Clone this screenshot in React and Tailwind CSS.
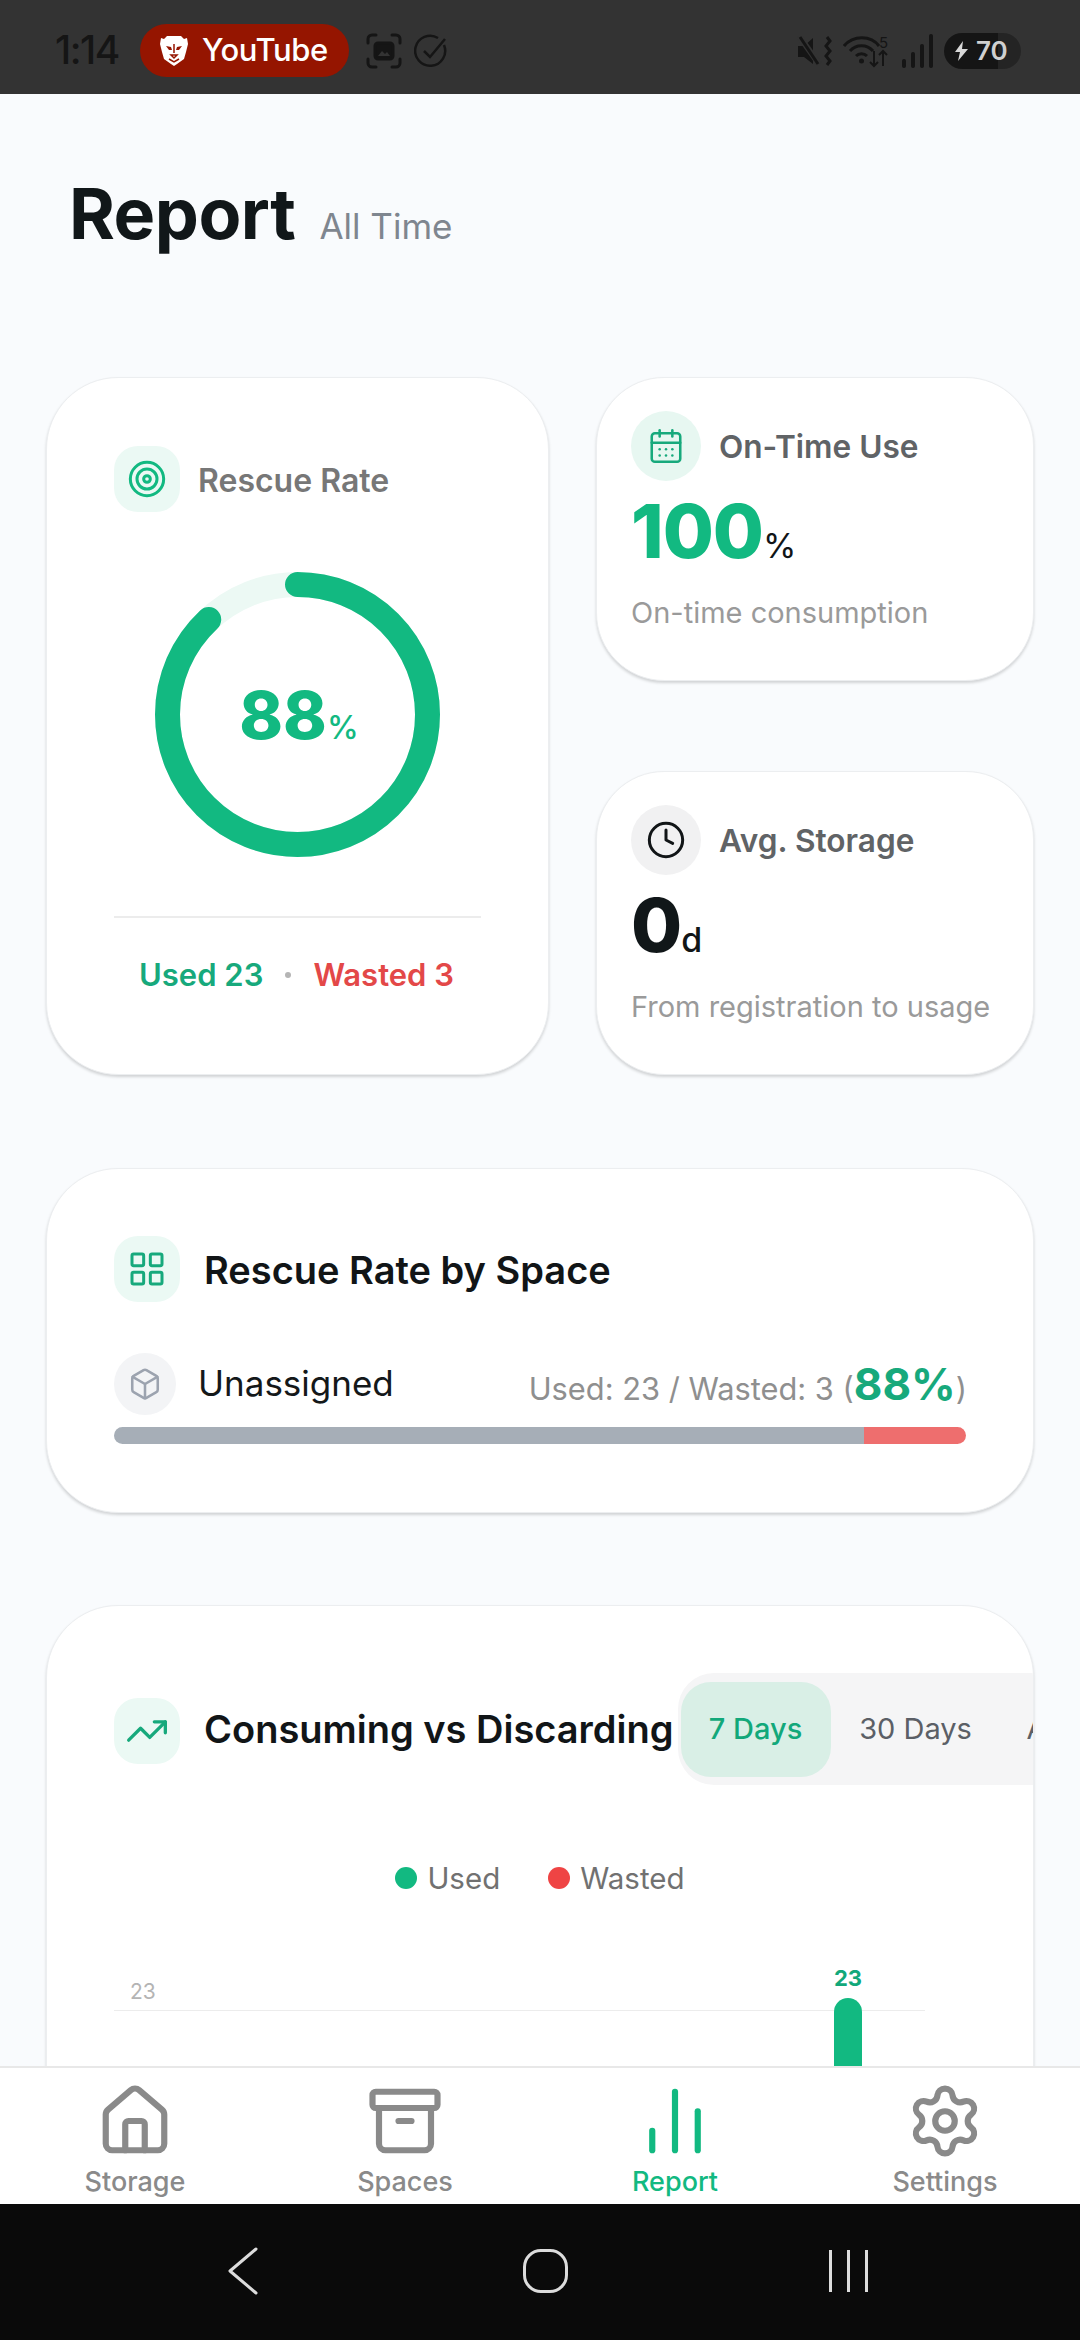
import { Archive, Box, CalendarDays, ChartNoAxesColumn, Clock, House, LayoutGrid, Settings, Target, TrendingUp } from "lucide-react"

const font = { fontFamily: "Inter, 'Liberation Sans', sans-serif" }

function StatusBar() {
  return (
    <div className="h-[94px] shrink-0 bg-[#333333] flex items-center pl-[55px] pt-[7px] text-[#151515]">
      <span className="text-[39px] font-medium tracking-[-1.5px] w-[85px]">1:14</span>
      <div className="w-[209px] h-[53px] rounded-full bg-[#951500] flex items-center pl-[20px] gap-[14px]">
        {/* brave lion */}
        <svg width="28" height="30" viewBox="0 0 28 30">
          <path d="M7 0h14l3 3 3-1 1 6-2 8-2 7-7 5-3 2-3-2-7-5-2-7-2-8 1-6 3 1z" fill="#fff" />
          <path d="M6 10l5 1 1 3-3 0zM22 10l-5 1-1 3 3 0z" fill="#951500" />
          <path d="M14 8v9M11 19h6l-3 3zM9 23l5 3 5-3" fill="none" stroke="#951500" strokeWidth="1.5" />
        </svg>
        <span className="text-[31px] font-medium text-white tracking-[-0.4px]">YouTube</span>
      </div>
      <svg className="ml-[17px]" width="36" height="36" viewBox="0 0 36 36" fill="none" stroke="#151515" strokeWidth="3" strokeLinecap="round">
        <path d="M2 10V6a4 4 0 0 1 4-4h4M26 2h4a4 4 0 0 1 4 4v4M34 26v4a4 4 0 0 1-4 4h-4M10 34H6a4 4 0 0 1-4-4v-4" />
        <rect x="9" y="10" width="18" height="16" rx="3" fill="#151515" />
        <path d="M12 23l4-5 3 3 2-2 3 4z" fill="#333333" stroke="none" />
      </svg>
      <svg className="ml-[12px]" width="34" height="34" viewBox="0 0 34 34" fill="none" stroke="#151515" strokeWidth="2.5">
        <path d="M30 11a15 15 0 1 1-6-7" />
        <path d="M10 17l6 6L31 5" />
      </svg>
      <div className="ml-auto mr-[59px] flex items-center">
        <svg width="35" height="30" viewBox="0 0 35 30" fill="#151515">
          <path d="M1 10h6l9-8v26l-9-7H1z" />
          <path d="M2 0l20 28" stroke="#333333" strokeWidth="6" />
          <path d="M3 1l18 27" stroke="#151515" strokeWidth="3" />
          <path d="M30 1l3 4-4 5 4 5-4 5 4 5-3 4" fill="none" stroke="#151515" strokeWidth="3" />
        </svg>
        <svg className="ml-[11px]" width="47" height="34" viewBox="0 0 47 34" fill="none" stroke="#151515" strokeWidth="3">
          <path d="M1 12C10 1 28 1 36 12M7 17C13 10 24 10 30 17M13 22C16 19 21 19 24 22" />
          <circle cx="18.5" cy="27" r="2.5" fill="#151515" stroke="none" />
          <path d="M31 17v15M27 28l4 4 4-4M40 32V17M36 21l4-4 4 4" strokeWidth="2" />
          <text x="36" y="14" fontSize="15" fill="#151515" stroke="none" fontFamily="Inter">5</text>
        </svg>
        <svg className="ml-[12px]" width="31" height="34" viewBox="0 0 31 34" fill="#151515">
          <rect x="0" y="25" width="4" height="9" rx="2" />
          <rect x="9" y="18" width="4" height="16" rx="2" />
          <rect x="18" y="10" width="4" height="24" rx="2" />
          <rect x="27" y="0" width="4" height="34" rx="2" />
        </svg>
        <div className="ml-[11px] w-[77px] h-[36px] rounded-full bg-[linear-gradient(to_right,#151515_70%,#242424_70%)] flex items-center pl-[10px] gap-[7px]">
          <svg width="15" height="20" viewBox="0 0 15 20" fill="#d8d8d8"><path d="M9 0L1 11h5l-2 9 10-12H8z" /></svg>
          <span className="text-[26px] font-semibold leading-none text-[#d0d0d0]">70</span>
        </div>
      </div>
    </div>
  )
}

function IconBox({ children, className = "" }) {
  return <div className={`w-[66px] h-[66px] shrink-0 flex items-center justify-center ${className}`}>{children}</div>
}

function cardCls(extra) {
  return `bg-white border border-[#eceef0] shadow-[0_2px_3px_rgba(0,0,0,0.16)] ${extra}`
}

function RescueCard() {
  return (
    <div className={cardCls("rounded-[72px] h-[698px] pt-[68px] px-[67px]")}>
      <div className="flex items-center gap-[18px]">
        <IconBox className="rounded-[24px] bg-[#ebf9f4]">
          <Target size={40} color="#12b981" strokeWidth={1.8} />
        </IconBox>
        <span className="text-[32px] font-semibold text-[#777777] translate-y-[2px]">Rescue Rate</span>
      </div>
      <div className="relative w-[285px] h-[285px] mt-[60px] ml-[41px]">
        <svg width="285" height="285" viewBox="0 0 285 285" style={{ transform: "rotate(-90deg)" }}>
          <circle cx="142.5" cy="142.5" r="130" fill="none" stroke="#ecf9f4" strokeWidth="25" />
          <circle cx="142.5" cy="142.5" r="130" fill="none" stroke="#12b981" strokeWidth="25" strokeLinecap="round" strokeDasharray="718.8 816.8" />
        </svg>
        <div className="absolute inset-0 flex items-baseline justify-center pt-[103px] pl-[3px] text-[#12b981]">
          <span className="text-[66px] leading-[80px] font-extrabold">88</span>
          <span className="text-[32px] font-medium">%</span>
        </div>
      </div>
      <div className="h-[2px] bg-[#ececec] mt-[59px]" />
      <div className="flex items-center justify-center gap-[22px] mt-[34px] text-[31px] font-semibold ml-[-2px]">
        <span className="text-[#17a97c]">Used 23</span>
        <span className="w-[6px] h-[6px] rounded-full bg-[#b5b5b5]" />
        <span className="text-[#e34848]">Wasted 3</span>
      </div>
    </div>
  )
}

function StatCard({ icon, iconBg, title, value, valueCls, unit, unitCls, sub }) {
  return (
    <div className={cardCls("rounded-[68px] h-[304px] pt-[33px] pl-[34px]")}>
      <div className="flex items-center gap-[18px]">
        <div className={`w-[70px] h-[70px] rounded-full flex items-center justify-center ${iconBg}`}>{icon}</div>
        <span className="text-[31.6px] font-semibold text-[#606366] translate-y-[1px]">{title}</span>
      </div>
      <div className="flex items-baseline leading-none mt-[10px]">
        <span className={`text-[74px] leading-[80px] font-extrabold tracking-[-1px] ${valueCls}`}>{value}</span>
        <span className={unitCls}>{unit}</span>
      </div>
      <div className="text-[29px] text-[#9a9a9a] mt-[20px]">{sub}</div>
    </div>
  )
}

function SpaceCard() {
  return (
    <div className={cardCls("rounded-[72px] h-[345px] mt-[93px] pt-[67px] px-[67px]")}>
      <div className="flex items-center gap-[24px]">
        <IconBox className="rounded-[24px] bg-[#ebf9f4]">
          <LayoutGrid size={40} color="#17a97c" strokeWidth={1.8} />
        </IconBox>
        <span className="text-[38px] font-semibold text-[#111517] translate-y-[1px]">Rescue Rate by Space</span>
      </div>
      <div className="flex items-center mt-[48px]">
        <div className="w-[62px] h-[62px] rounded-full bg-[#f3f4f6] flex items-center justify-center">
          <Box size={34} color="#9ca3af" strokeWidth={1.8} />
        </div>
        <span className="ml-[22px] text-[35px] text-[#14181a]">Unassigned</span>
        <div className="ml-auto mr-[-1px] text-[30.8px] text-[#8f8f8f] flex items-baseline mt-[1px]">
          <span>Used: 23 / Wasted: 3 (</span>
          <span className="text-[44px] font-bold text-[#17a97c]">88%</span>
          <span>)</span>
        </div>
      </div>
      <div className="flex h-[17px] rounded-full overflow-hidden mt-[10px]">
        <div className="bg-[#a6aeb7] w-[750px]" />
        <div className="bg-[#ee6e6e] flex-1" />
      </div>
    </div>
  )
}

function ChartCard() {
  return (
    <div className={cardCls("rounded-t-[72px] h-[520px] mt-[92px] pt-[67px] pl-[67px] overflow-hidden")}>
      <div className="flex items-center h-[112px]">
        <IconBox className="rounded-[24px] bg-[#ebf9f4] translate-y-[2px]">
          <TrendingUp size={44} color="#17a97c" strokeWidth={1.8} />
        </IconBox>
        <span className="ml-[24px] text-[38px] font-semibold text-[#111517] whitespace-nowrap">Consuming vs Discarding</span>
        <div className="ml-[4px] flex items-center h-[112px] bg-[#f5f5f6] rounded-l-[36px] pl-[3px] shrink-0 w-[500px] text-[29px]">
          <div className="w-[150px] h-[95px] rounded-[30px] bg-[#d9efe6] flex items-center justify-center font-medium text-[#12a87a]">7 Days</div>
          <div className="w-[170px] text-center text-[#5b5f66]">30 Days</div>
          <div className="ml-[26px] text-[#5b5f66]">All</div>
        </div>
      </div>
      <div className="flex items-center justify-center mt-[71px] text-[29.5px] text-[#717171] mr-[67px]">
        <div className="flex items-center gap-[10px]">
          <span className="w-[22px] h-[22px] rounded-full bg-[#12b981]" />
          Used
        </div>
        <div className="flex items-center gap-[10px] ml-[48px]">
          <span className="w-[22px] h-[22px] rounded-full bg-[#ef4444]" />
          Wasted
        </div>
      </div>
      <div className="relative mt-[66px] w-[811px] h-[120px]">
        <span className="absolute left-[16px] top-[10px] text-[21px] text-[#b4b4b4]">23</span>
        <div className="absolute left-0 right-0 top-[44px] h-[1px] bg-[#ececec]" />
        <span className="absolute left-[720px] top-[-4px] w-[28px] text-center text-[22px] font-bold text-[#12a87a]">23</span>
        <div className="absolute left-[720px] top-[32px] w-[28px] h-[120px] rounded-t-full bg-[#12b981]" />
      </div>
    </div>
  )
}

function BottomNav() {
  const tabs = [
    { label: "Storage", Icon: House },
    { label: "Spaces", Icon: Archive },
    { label: "Report", Icon: ChartNoAxesColumn, active: true },
    { label: "Settings", Icon: Settings },
  ]
  return (
    <div className="h-[138px] shrink-0 bg-white border-t-2 border-[#e8e8e8] grid grid-cols-4 relative">
      {tabs.map(({ label, Icon, active }) => (
        <div key={label} className={`flex flex-col items-center pt-[14px] ${active ? "text-[#12b981]" : "text-[#8a8a8a]"}`}>
          <Icon size={78} strokeWidth={1.9} />
          <span className="text-[27px] font-medium leading-[32px] mt-[6px]">{label}</span>
        </div>
      ))}
    </div>
  )
}

function GestureBar() {
  return (
    <div className="h-[136px] shrink-0 bg-[#0a0a0a] flex items-center justify-center pb-[2px]">
      <svg className="absolute left-[226px]" width="34" height="48" viewBox="0 0 34 48" fill="none" stroke="#dcdcdc" strokeWidth="3" strokeLinecap="round" strokeLinejoin="round">
        <path d="M30 2L4 24l26 22" />
      </svg>
      <div className="absolute left-[523px] w-[45px] h-[44px] rounded-[18px] border-[3px] border-[#dcdcdc]" />
      <div className="absolute left-[829px] flex gap-[15px]">
        <span className="w-[3px] h-[42px] bg-[#dcdcdc]" />
        <span className="w-[3px] h-[42px] bg-[#dcdcdc]" />
        <span className="w-[3px] h-[42px] bg-[#dcdcdc]" />
      </div>
    </div>
  )
}

export default function App() {
  return (
    <div className="w-[1080px] h-[2340px] flex flex-col overflow-hidden bg-[#f9fbfd]" style={font}>
      <StatusBar />
      <main className="flex-1 min-h-0 overflow-hidden px-[46px]">
        <div className="flex items-baseline pt-[78px] pl-[23px] h-[283px]">
          <span className="text-[70px] leading-[84px] font-bold tracking-[-0.5px] text-[#111719]">Report</span>
          <span className="ml-[24px] text-[35px] text-[#7f868f]">All Time</span>
        </div>
        <div className="grid grid-cols-[503px_438px] gap-x-[47px]">
          <RescueCard />
          <div className="flex flex-col justify-between">
            <StatCard
              icon={<CalendarDays size={38} color="#17a97c" strokeWidth={1.6} />}
              iconBg="bg-[#e7f7f1]"
              title="On-Time Use"
              value="100"
              valueCls="text-[#12b981]"
              unit="%"
              unitCls="text-[34px] text-[#111517]"
              sub="On-time consumption"
            />
            <StatCard
              icon={<Clock size={40} color="#111517" strokeWidth={1.8} />}
              iconBg="bg-[#f1f1f2]"
              title="Avg. Storage"
              value="0"
              valueCls="text-[#111719]"
              unit="d"
              unitCls="text-[34px] font-medium text-[#111517]"
              sub="From registration to usage"
            />
          </div>
        </div>
        <SpaceCard />
        <ChartCard />
      </main>
      <BottomNav />
      <GestureBar />
    </div>
  )
}
